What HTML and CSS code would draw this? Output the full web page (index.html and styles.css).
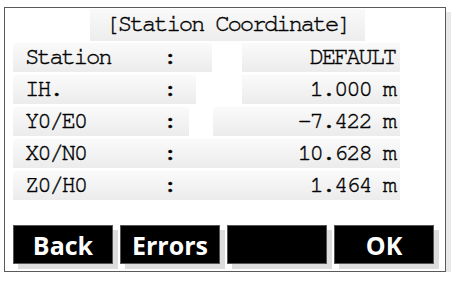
FILE: index.html
```html
<!DOCTYPE html>
<html lang="en">
<head>
    <meta charset="UTF-8">
    <title>Station Coordinate</title>
    <link rel="stylesheet" href="styles.css">
</head>
<body>

    <div class="screen">
        <div class="title">[Station Coordinate]</div>

        <div class="rows">
            <div class="row row-station">
                <div class="label"><span class="name">Station</span><span>:</span></div>
                <div class="value">DEFAULT</div>
            </div>
            <div class="row row-ih">
                <div class="label"><span class="name">IH.</span><span>:</span></div>
                <div class="value">1.000 m</div>
            </div>
            <div class="row row-y">
                <div class="label"><span class="name">Y0/E0</span><span>:</span></div>
                <div class="value">-7.422 m</div>
            </div>
            <div class="row row-x">
                <div class="label"><span class="name">X0/N0</span><span>:</span></div>
                <div class="value">10.628 m</div>
            </div>
            <div class="row row-z">
                <div class="label"><span class="name">Z0/H0</span><span>:</span></div>
                <div class="value">1.464 m</div>
            </div>
        </div>

        <div class="buttons">
            <button class="soft-key">Back</button>
            <button class="soft-key">Errors</button>
            <button class="soft-key"></button>
            <button class="soft-key">OK</button>
        </div>
    </div>

</body>
</html>
```

FILE: styles.css
```css
body { margin: 0; background: #fff; font-family: "Nimbus Mono PS", "FreeMono", "Liberation Mono", monospace; color: #000; }
.screen { margin: 7px 0 0 4px; width: 440px; height: 263px; border: 1px solid #5a5a5a; box-shadow: 5px 5px 0 #e8e8e8; }
.title { margin: 1px 0 0 85px; width: 275px; height: 32px; line-height: 31px; text-align: center; font-size: 24px; letter-spacing: -2.2px; -webkit-text-stroke: 0.4px #000; background: linear-gradient(#f9f9f9, #ededed); }
.rows { padding-left: 8px; }
.row { display: flex; align-items: center; height: 32px; width: 387px; font-size: 24px; letter-spacing: -2.2px; -webkit-text-stroke: 0.4px #000; }
.label { display: flex; align-items: center; height: 29px; padding-left: 12px; box-sizing: border-box; background: linear-gradient(#fafafa, #ececec); }
.label .name { width: 138px; }
.value { margin-left: auto; height: 29px; line-height: 29px; padding-right: 5px; text-align: right; box-sizing: border-box; background: linear-gradient(#fafafa, #ececec); }
.row-station .label { width: 199px; }
.row-station .value, .row-ih .value { width: 158px; }
.row-ih .label { width: 183px; }
.row-y .label { width: 176px; }
.row-y .value { width: 187px; }
.row-x .label { width: 200px; }
.row-x .value { width: 187px; }
.row-z .label { width: 212px; }
.row-z .value { width: 175px; }
.buttons { display: flex; gap: 7px; margin-top: 24px; padding-left: 8px; }
.soft-key { width: 100px; height: 39px; padding: 0; border: 1px solid #555; background: #000; color: #fff; font-family: "Open Sans", sans-serif; font-weight: bold; font-size: 25px; line-height: 36px; box-shadow: 5px 5px 0 #dcdcdc; cursor: pointer; }
```
